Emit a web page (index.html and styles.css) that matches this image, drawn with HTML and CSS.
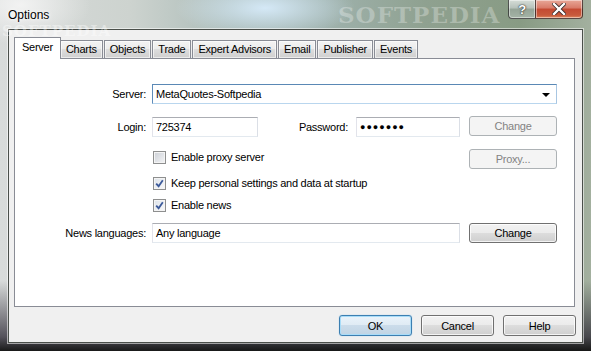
FILE: index.html
```html
<!DOCTYPE html>
<html lang="en">
<head>
    <meta charset="UTF-8">
    <meta name="viewport" content="width=device-width, initial-scale=1.0">
    <title>Options</title>
    <link rel="stylesheet" href="styles.css">
</head>
<body>
    <div class="window">
        <div class="watermark">SOFTPEDIA</div>
        <div class="watermark watermark-left">SOFTPEDIA</div>
        <div class="titlebar">
            <span class="title">Options</span>
            <div class="caption-buttons">
                <span class="cap cap-help">?</span>
                <span class="cap cap-close">
                    <svg width="14" height="12" viewBox="0 0 14 12">
                        <path d="M2 1 L12 11 M12 1 L2 11" stroke="#3a2a2a" stroke-width="4" stroke-linecap="square"/>
                        <path d="M2 1 L12 11 M12 1 L2 11" stroke="#ffffff" stroke-width="2.4" stroke-linecap="square"/>
                    </svg>
                </span>
            </div>
        </div>
        <div class="client">
            <div class="tabs">
                <span class="tab active">Server</span>
                <span class="tab">Charts</span>
                <span class="tab">Objects</span>
                <span class="tab">Trade</span>
                <span class="tab">Expert Advisors</span>
                <span class="tab">Email</span>
                <span class="tab">Publisher</span>
                <span class="tab">Events</span>
            </div>
            <div class="panel">
                <div class="form">
                    <label class="lbl row-1">Server:</label>
                    <div class="combo row-1">
                        <span>MetaQuotes-Softpedia</span>
                        <span class="arrow"></span>
                    </div>

                    <label class="lbl row-2">Login:</label>
                    <div class="field login row-2">725374</div>
                    <label class="lbl lbl-password row-2">Password:</label>
                    <div class="field password row-2">●●●●●●●</div>
                    <span class="btn disabled row-2 btn-col">Change</span>

                    <div class="check-row row-3 first-check">
                        <span class="checkbox"></span>
                        <span>Enable proxy server</span>
                    </div>
                    <span class="btn disabled row-3 btn-col">Proxy...</span>

                    <div class="check-row row-4">
                        <span class="checkbox checked">
                            <svg width="9" height="9" viewBox="0 0 9 9"><path d="M1.2 4.6 L3.6 7.2 L7.8 1.2" fill="none" stroke="#3c5a9a" stroke-width="1.8"/></svg>
                        </span>
                        <span>Keep personal settings and data at startup</span>
                    </div>

                    <div class="check-row row-5">
                        <span class="checkbox checked">
                            <svg width="9" height="9" viewBox="0 0 9 9"><path d="M1.2 4.6 L3.6 7.2 L7.8 1.2" fill="none" stroke="#3c5a9a" stroke-width="1.8"/></svg>
                        </span>
                        <span>Enable news</span>
                    </div>

                    <label class="lbl row-6">News languages:</label>
                    <div class="field news row-6">Any language</div>
                    <span class="btn row-6 btn-col">Change</span>
                </div>
            </div>
            <div class="actions">
                <span class="btn btn-default">OK</span>
                <span class="btn">Cancel</span>
                <span class="btn">Help</span>
            </div>
        </div>
    </div>
</body>
</html>
```

FILE: styles.css
```css
body {
    margin: 0;
    font-family: "Liberation Sans", Arial, sans-serif;
    font-size: 11px;
    letter-spacing: -0.25px;
    color: #000;
}
.window {
    position: relative;
    width: 591px;
    height: 351px;
    box-sizing: border-box;
    padding: 0 8px 8px 8px;
    display: flex;
    flex-direction: column;
    overflow: hidden;
    background:
        linear-gradient(to bottom, rgba(0, 0, 0, 0) 0, rgba(0, 0, 0, 0) 80%, rgba(40, 36, 48, 0.75) 96%, rgba(15, 15, 15, 0.95) 100%),
        radial-gradient(ellipse 90px 30px at 265px 8px, rgba(215, 235, 250, 0.95), rgba(215, 235, 250, 0)),
        radial-gradient(ellipse 70px 40px at 20px 5px, rgba(245, 245, 245, 0.9), rgba(245, 245, 245, 0)),
        linear-gradient(to right, #d8dbda 0%, #cdd3cf 22%, #a9bab6 40%, #9fb2ad 55%, #8fa190 72%, #889b84 88%, #a3b09f 100%);
}
.watermark {
    position: absolute;
    z-index: 2;
    top: 1px;
    left: 338px;
    font-family: "DejaVu Serif", serif;
    font-weight: bold;
    font-size: 23px;
    letter-spacing: 1px;
    color: rgba(255, 255, 255, 0.28);
    pointer-events: none;
}
.watermark-left {
    top: 24px;
    left: 2px;
    font-size: 15px;
    line-height: 15px;
    color: rgba(255, 255, 255, 0.4);
}
.titlebar {
    height: 29px;
    display: flex;
    justify-content: space-between;
    align-items: flex-start;
    position: relative;
}
.title {
    margin-top: 8px;
    font-size: 12px;
    line-height: 15px;
    letter-spacing: 0;
    text-shadow: 0 0 6px #fff, 0 0 3px #fff;
}
.caption-buttons {
    display: flex;
}
.cap {
    height: 19px;
    box-sizing: border-box;
    display: flex;
    align-items: center;
    justify-content: center;
    border: 1px solid rgba(40, 40, 40, 0.75);
    border-top: none;
    box-shadow: inset 0 0 0 1px rgba(255, 255, 255, 0.45);
}
.cap-help {
    width: 27px;
    border-radius: 0 0 0 4px;
    border-right: none;
    background: linear-gradient(#d6ddd8 0%, #b6c1ba 45%, #95a497 50%, #a5b4a6 100%);
    color: #fff;
    font-weight: bold;
    font-size: 13px;
    text-shadow: 0 0 2px #333, 0 0 1px #000;
}
.cap-close {
    width: 48px;
    border-radius: 0 0 4px 0;
    background: linear-gradient(#e8a898 0%, #d87a68 45%, #c44a32 50%, #c85a3c 85%, #e08a60 100%);
}
.client {
    flex: 1;
    background-color: #f0f0f0;
    border: 1px solid #4a4f4a;
    box-shadow: 0 0 0 1px rgba(255, 255, 255, 0.55);
    display: flex;
    flex-direction: column;
    padding: 7px 6px 0 5px;
    position: relative;
}
.tabs {
    display: flex;
    align-items: flex-end;
    height: 21px;
}
.tab {
    height: 18px;
    box-sizing: border-box;
    padding: 0 5px;
    line-height: 17px;
    border: 1px solid #898c95;
    border-bottom: none;
    margin-right: 1px;
    background: linear-gradient(#f3f3f3 0%, #ebebeb 50%, #dddddd 50%, #cfcfcf 100%);
    box-shadow: inset 0 0 0 1px rgba(255, 255, 255, 0.6);
    white-space: nowrap;
}
.tab.active {
    position: relative;
    z-index: 1;
    height: 22px;
    margin-bottom: -1px;
    margin-right: -1px;
    padding: 0 7px;
    line-height: 18px;
    background: #fff;
    box-shadow: none;
}
.panel {
    height: 249px;
    margin-right: 1px;
    box-sizing: border-box;
    border: 1px solid #898c95;
    background-color: #fff;
}
.form {
    display: grid;
    grid-template-columns: 131px 106px 86px 104px 91px;
    grid-template-rows: 33px 32px 24px 22px 28px 20px;
    column-gap: 6px;
    padding-top: 25px;
    align-items: start;
}
.row-1 { grid-row: 1; }
.row-2 { grid-row: 2; }
.row-3 { grid-row: 3; }
.row-4 { grid-row: 4; }
.row-5 { grid-row: 5; }
.row-6 { grid-row: 6; }
.lbl {
    grid-column: 1;
    text-align: right;
    line-height: 20px;
}
.lbl-password {
    grid-column: 3;
    padding-right: 2px;
}
.combo {
    grid-column: 2 / 6;
    height: 20px;
    box-sizing: border-box;
    border: 1px solid;
    border-color: #5a88b5 #a8c6e2 #b9d6ee #5e8cba;
    padding: 0 6px 0 3px;
    display: flex;
    justify-content: space-between;
    align-items: center;
    background-color: #fff;
}
.arrow {
    width: 0;
    height: 0;
    border-left: 4px solid transparent;
    border-right: 4px solid transparent;
    border-top: 4px solid #000;
    margin-top: 1px;
}
.field {
    height: 20px;
    box-sizing: border-box;
    border: 1px solid;
    border-color: #abadb3 #dbdfe6 #e3e9ef #e2e3ea;
    padding: 0 3px;
    line-height: 18px;
    background-color: #fff;
}
.login {
    grid-column: 2;
}
.password {
    grid-column: 4;
    font-size: 9px;
    letter-spacing: 1px;
    padding-left: 3px;
}
.news {
    grid-column: 2 / 5;
}
.btn {
    width: 73px;
    height: 21px;
    box-sizing: border-box;
    border: 1px solid #707070;
    border-radius: 3px;
    display: flex;
    align-items: center;
    justify-content: center;
    background: linear-gradient(#f2f2f2 0%, #ebebeb 50%, #dddddd 50%, #cfcfcf 100%);
    box-shadow: inset 0 0 0 1px rgba(255, 255, 255, 0.75);
}
.btn-col {
    grid-column: 5;
    justify-self: end;
    width: 88px;
    height: 20px;
}
.row-2.btn-col {
    margin-top: -1px;
}
.btn.disabled {
    border-color: #adb2b5;
    background: #f4f4f4;
    color: #838383;
    box-shadow: none;
}
.btn-default {
    border-color: #3c7fb1;
    background: linear-gradient(#eaf3fa 0%, #dfebf4 50%, #cbdcea 50%, #c0d4e4 100%);
    box-shadow: inset 0 0 0 1px #a8dcf8, 0 0 1px #6fb6e6;
}
.check-row {
    grid-column: 2 / 5;
    height: 20px;
    display: flex;
    align-items: center;
    gap: 5px;
    padding-left: 1px;
}
.first-check {
    margin-top: -2px;
}
.checkbox {
    width: 13px;
    height: 13px;
    box-sizing: border-box;
    border: 1px solid #8e8f8f;
    background: linear-gradient(135deg, #cbcfd5 0%, #e4e6ea 60%, #f4f4f4 100%);
    box-shadow: inset 0 0 0 1px #f4f4f4;
    display: flex;
    align-items: center;
    justify-content: center;
}
.checkbox.checked {
    background: linear-gradient(135deg, #dde3ea 0%, #eef0f3 60%, #f8f8f8 100%);
}
.actions {
    display: flex;
    justify-content: flex-end;
    gap: 9px;
    margin-top: 8px;
}
```
